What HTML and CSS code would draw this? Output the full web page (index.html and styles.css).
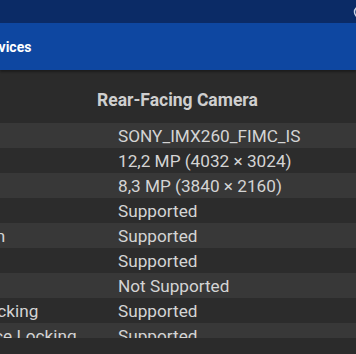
FILE: index.html
```html
<!DOCTYPE html>
<html lang="en">
<head>
  <meta charset="UTF-8" />
  <meta name="viewport" content="width=device-width, initial-scale=1.0" />
  <title>Devices</title>
  <link rel="stylesheet" href="styles.css">
</head>
<body>
  <div class="statusbar">
    <svg class="status-icon" width="14" height="14" viewBox="0 0 14 14">
      <circle cx="7" cy="7" r="5.5" fill="none" stroke="#c9d3e6" stroke-width="1.5" />
    </svg>
  </div>
  <div class="appbar">
    <div class="title">Devices</div>
  </div>
  <div class="content">
    <div class="head-row">
      <div></div>
      <div class="head">Rear-Facing Camera</div>
    </div>
    <div class="table">
      <div class="row"><div class="label">Camera ID</div><div class="value">SONY_IMX260_FIMC_IS</div></div>
      <div class="row"><div class="label">Photo</div><div class="value">12,2 MP (4032 × 3024)</div></div>
      <div class="row"><div class="label">Video</div><div class="value">8,3 MP (3840 × 2160)</div></div>
      <div class="row"><div class="label">Flash</div><div class="value">Supported</div></div>
      <div class="row"><div class="label">Video Stabilization</div><div class="value">Supported</div></div>
      <div class="row"><div class="label">Face Detection</div><div class="value">Supported</div></div>
      <div class="row"><div class="label">RAW Capture</div><div class="value">Not Supported</div></div>
      <div class="row"><div class="label">Auto Exposure Locking</div><div class="value">Supported</div></div>
      <div class="row"><div class="label">Auto White Balance Locking</div><div class="value">Supported</div></div>
    </div>
  </div>
</body>
</html>
```

FILE: styles.css
```css
body {
  margin: 0;
  font-family: Roboto, "Noto Sans", sans-serif;
  background: #2b2b2b;
  overflow: hidden;
}
.statusbar {
  height: 23px;
  background: #0b2b66;
  display: flex;
  justify-content: flex-end;
  align-items: center;
}
.status-icon {
  margin-right: -11px;
}
.appbar {
  height: 47px;
  background: #0e47a1;
  display: flex;
  align-items: center;
  box-shadow: 0 2px 2px rgba(0, 0, 0, 0.35);
  position: relative;
}
.title {
  color: #ffffff;
  font-size: 14px;
  font-weight: 700;
  margin-left: -18px;
}
.content {
  margin-left: -137px;
  height: 268px;
  overflow: hidden;
}
.head-row,
.row {
  display: grid;
  grid-template-columns: 255px 1fr;
}
.head-row {
  height: 53px;
  align-items: center;
  padding-top: 6px;
  box-sizing: border-box;
}
.head {
  color: #cfcfcf;
  font-size: 17.5px;
  font-weight: 700;
  margin-left: -21px;
}
.row {
  height: 25px;
  align-items: center;
  color: #d4d4d4;
  font-size: 17.2px;
  background: #2c2c2c;
}
.row:nth-child(odd) {
  background: #383838;
}
.label,
.value {
  white-space: nowrap;
}
```
